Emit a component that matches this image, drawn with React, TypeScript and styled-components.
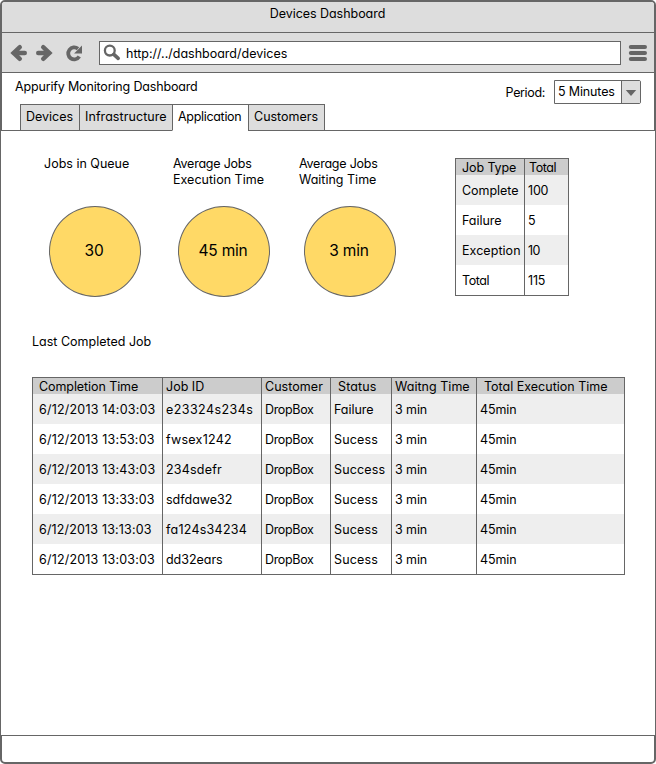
import React from 'react';
import styled, { createGlobalStyle } from 'styled-components';

const line = '#666';
const chrome = '#ddd';

const GlobalStyle = createGlobalStyle`
  *, *::before, *::after { box-sizing: border-box; }
  body { margin: 0; background: #fff; }
`;

const Window = styled.div`
  display: flex;
  flex-direction: column;
  width: 656px;
  height: 764px;
  border: 2px solid ${line};
  border-radius: 5px;
  background: #fff;
  color: #000;
  font: 12.5px/16px Inter, 'Liberation Sans', sans-serif;
  font-feature-settings: 'cv11';
`;

const Text = styled.span<{ $track?: number }>`
  letter-spacing: ${(p) => p.$track ?? 0}px;
  white-space: pre;
`;

const TitleBar = styled.header`
  height: 31px;
  padding: 4px 1px 0 0;
  border-bottom: 1px solid ${line};
  border-radius: 3px 3px 0 0;
  background: ${chrome};
  text-align: center;
`;

const Toolbar = styled.div`
  display: flex;
  align-items: center;
  height: 40px;
  padding: 0 6px 0 8px;
  border-bottom: 1px solid ${line};
  background: ${chrome};
`;

const NavIcons = styled.svg`
  display: block;
  flex: none;
  width: 89px;
  height: 24px;
`;

const AddressBar = styled.div`
  display: flex;
  align-items: center;
  width: 522px;
  height: 24px;
  padding-top: 2px;
  border: 1px solid ${line};
  background: #fff;
`;

const SearchGlyph = styled.svg`
  flex: none;
  width: 25px;
  height: 22px;
  margin: -2px 1px 0 0;
`;

const MenuGlyph = styled.svg`
  width: 20px;
  height: 18px;
  margin-left: 7px;
`;

const PageHeader = styled.div`
  display: flex;
  height: 57px;
  padding: 6px 13px 0 18px;
  justify-content: space-between;
`;

const HeaderLeft = styled.div`
  display: flex;
  flex-direction: column;
  justify-content: space-between;
`;

const PageTitle = styled.h1`
  margin: 0 0 0 -5px;
  font: inherit;
`;

const Tabs = styled.nav`
  display: flex;
  margin-bottom: -1px;
`;

const Tab = styled.button<{ $width: number; $active?: boolean }>`
  position: relative;
  width: ${(p) => p.$width}px;
  height: 27px;
  margin: 0 -1px 0 0;
  padding: 0 0 1px 5px;
  border: 1px solid ${line};
  border-bottom-color: ${(p) => (p.$active ? '#fff' : line)};
  background: ${(p) => (p.$active ? '#fff' : chrome)};
  color: inherit;
  font: inherit;
  font-feature-settings: inherit;
  text-align: left;
`;

const PeriodField = styled.label`
  display: flex;
  height: 24px;
  margin-top: 1px;
  gap: 9px;
`;

const PeriodLabel = styled.span`
  padding-top: 5px;
`;

const Select = styled.div`
  display: flex;
  width: 87px;
  height: 24px;
  border: 1px solid ${line};
  border-radius: 0 2px 2px 0;
`;

const SelectValue = styled.div`
  width: 67px;
  padding: 3px 0 0 3px;
  border-right: 1px solid ${line};
`;

const SelectArrow = styled.div`
  display: flex;
  flex: 1;
  align-items: center;
  justify-content: center;
  padding-top: 2px;
  background: ${chrome};
`;

const Panel = styled.main`
  display: flex;
  flex-direction: column;
  height: 606px;
  margin: 0 -2px;
  padding: 27px 31px 0;
  border: 1px solid ${line};
  background: #fff;
`;

const Summary = styled.section`
  display: flex;
  height: 176px;
`;

const Metric = styled.div<{ $width: number }>`
  width: ${(p) => p.$width}px;
  padding-left: 17px;
`;

const MetricLabel = styled.div`
  display: flex;
  flex-direction: column;
  height: 50px;
  margin: -2px 0 0 -5px;
`;

const Disc = styled.div`
  display: flex;
  align-items: center;
  justify-content: center;
  width: 92px;
  height: 91px;
  padding: 0 2px 2px 0;
  border: 1px solid ${line};
  border-radius: 50%;
  background: #ffd966;
  font-size: 15.5px;
`;

const SectionTitle = styled.h2`
  height: 43px;
  margin: 0;
  font: inherit;
`;

const Table = styled.div<{ $columns: string }>`
  display: grid;
  grid-template-columns: ${(p) => p.$columns};
  width: max-content;
  height: max-content;
  border: 1px solid ${line};
`;

const Cell = styled.div<{ $head?: boolean; $shade?: boolean; $first?: boolean; $last?: boolean; $indent?: number }>`
  display: flex;
  align-items: center;
  height: ${(p) => (p.$head ? 16 : 30)}px;
  padding-top: 2px;
  padding-left: ${(p) => (p.$first ? 6 : 3) + (p.$indent ?? 0)}px;
  border-right: ${(p) => (p.$last ? 0 : 1)}px solid ${line};
  background: ${(p) => (p.$head ? '#ccc' : p.$shade ? '#eee' : '#fff')};
`;

type Entry = [text: string, track: number, indent?: number];

function DataTable({ columns, head, rows }: { columns: string; head: Entry[]; rows: Entry[][] }) {
  return (
    <Table $columns={columns}>
      {[head, ...rows].map((row, r) =>
        row.map(([text, track, indent], c) => (
          <Cell
            key={`${r}-${c}`}
            $head={r === 0}
            $shade={r % 2 === 1}
            $first={c === 0}
            $last={c === row.length - 1}
            $indent={indent}
          >
            <Text $track={track}>{text}</Text>
          </Cell>
        )),
      )}
    </Table>
  );
}

const tabs = [
  { label: 'Devices', width: 60, track: 0 },
  { label: 'Infrastructure', width: 94, track: 0.07 },
  { label: 'Application', width: 77, track: -0.31, active: true },
  { label: 'Customers', width: 77, track: 0 },
];

const metrics: { width: number; lines: Entry[]; value: Entry }[] = [
  { width: 129, lines: [['Jobs in Queue', 0]], value: ['30', -0.2] },
  { width: 126, lines: [['Average Jobs', -0.23], ['Execution Time', 0.02]], value: ['45 min', -0.2] },
  { width: 168, lines: [['Average Jobs', -0.23], ['Waiting Time', 0]], value: ['3 min', -0.2] },
];

const typeHead: Entry[] = [['Job Type', -0.1], ['Total', -0.4, 1]];
const typeRows: Entry[][] = [
  [['Complete', -0.04], ['100', -0.2]],
  [['Failure', -0.05], ['5', 0]],
  [['Exception', 0.05], ['10', -0.6]],
  [['Total', -0.4], ['115', -0.2]],
];

const job = (time: Entry, id: Entry, status: Entry): Entry[] => [
  time, id, ['DropBox', -0.33], status, ['3 min', -0.1], ['45min', -0.1],
];

const jobHead: Entry[] = [
  ['Completion Time', -0.08],
  ['Job ID', 0],
  ['Customer', 0.05],
  ['Status', 0.12, 4],
  ['Waitng Time', 0.03],
  ['Total Execution Time', 0, 4],
];
const jobRows: Entry[][] = [
  job(['6/12/2013 14:03:03', 0.2], ['e23324s234s', 0.43], ['Failure', -0.05]),
  job(['6/12/2013 13:53:03', 0.19], ['fwsex1242', 0.24], ['Sucess', 0.16]),
  job(['6/12/2013 13:43:03', 0.2], ['234sdefr', 0.2], ['Success', 0.15]),
  job(['6/12/2013 13:33:03', 0.19], ['sdfdawe32', 0], ['Sucess', 0.16]),
  job(['6/12/2013 13:13:03', 0.16], ['fa124s34234', 0.25], ['Sucess', 0.16]),
  job(['6/12/2013 13:03:03', 0.19], ['dd32ears', -0.03], ['Sucess', 0.16]),
];

export default function App() {
  return (
    <>
      <GlobalStyle />
      <Window>
        <TitleBar>
          <Text $track={-0.04}>Devices Dashboard</Text>
        </TitleBar>
        <Toolbar>
          <NavIcons viewBox="10 40 89 24" fill="none" stroke={line} strokeWidth="4.4">
            <path d="M19.8 46.2 L13.6 52 L19.8 57.8 M13.6 52 H24.8" strokeLinecap="round" />
            <path d="M43.2 46.2 L49.4 52 L43.2 57.8 M49.4 52 H38.2" strokeLinecap="round" />
            <path d="M79.3 55.6 A6 6 0 1 1 78 47.7" strokeWidth="3.8" />
            <path d="M82 44.6 V52.5 H74.1 Z" fill={line} stroke="none" />
          </NavIcons>
          <AddressBar>
            <SearchGlyph viewBox="100 42 25 22" fill="none" stroke={line}>
              <circle cx="109.8" cy="50.6" r="4.9" strokeWidth="2.3" />
              <path d="M113.8 54.4 L118.2 58.4" strokeWidth="3.6" strokeLinecap="round" />
            </SearchGlyph>
            <Text $track={0}>http://../dashboard/devices</Text>
          </AddressBar>
          <MenuGlyph viewBox="0 0 20 18" stroke={line} strokeWidth="4" strokeLinecap="round">
            <path d="M2.8 3 H17 M2.8 9 H17 M2.8 15 H17" />
          </MenuGlyph>
        </Toolbar>
        <PageHeader>
          <HeaderLeft>
            <PageTitle>
              <Text $track={-0.16}>Appurify Monitoring Dashboard</Text>
            </PageTitle>
            <Tabs>
              {tabs.map((t) => (
                <Tab key={t.label} $width={t.width} $active={t.active}>
                  <Text $track={t.track}>{t.label}</Text>
                </Tab>
              ))}
            </Tabs>
          </HeaderLeft>
          <PeriodField>
            <PeriodLabel>
              <Text $track={-0.35}>Period:</Text>
            </PeriodLabel>
            <Select>
              <SelectValue>
                <Text $track={-0.15}>5 Minutes</Text>
              </SelectValue>
              <SelectArrow>
                <svg width="12" height="8" viewBox="0 0 12 8">
                  <path d="M0.8 1 H11.2 L6 7 Z" fill={line} />
                </svg>
              </SelectArrow>
            </Select>
          </PeriodField>
        </PageHeader>
        <Panel>
          <Summary>
            {metrics.map((m, i) => (
              <Metric key={i} $width={m.width}>
                <MetricLabel>
                  {m.lines.map(([text, track]) => (
                    <Text key={text} $track={track}>{text}</Text>
                  ))}
                </MetricLabel>
                <Disc>
                  <Text $track={m.value[1]}>{m.value[0]}</Text>
                </Disc>
              </Metric>
            ))}
            <DataTable columns="69px 43px" head={typeHead} rows={typeRows} />
          </Summary>
          <SectionTitle>
            <Text $track={0}>Last Completed Job</Text>
          </SectionTitle>
          <DataTable columns="130px 99px 69px 61px 85px 147px" head={jobHead} rows={jobRows} />
        </Panel>
      </Window>
    </>
  );
}
